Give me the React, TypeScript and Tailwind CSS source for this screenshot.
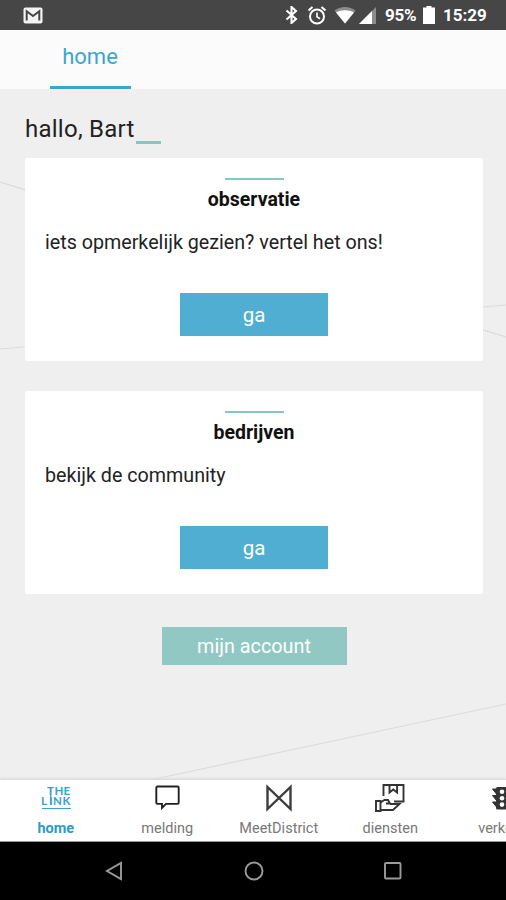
import React from 'react';

interface TopicCardProps {
  title: string;
  text: string;
}

function TopicCard({ title, text }: TopicCardProps) {
  return (
    <section className="flex h-[203px] flex-col items-center rounded-[2px] bg-white px-5 pt-5">
      <span className="h-[2px] w-[59px] shrink-0 bg-[#87c7c2]" />
      <h2 className="mt-2 text-[19.5px] leading-6 font-bold text-[#111]">{title}</h2>
      <p className="mt-[17px] w-full text-[19.7px] leading-7 text-[#222]">{text}</p>
      <button className="mt-9 h-[43px] w-[148px] shrink-0 bg-[#4faed1] pt-0.5 text-[20.5px] text-white">
        ga
      </button>
    </section>
  );
}

function StatusBar() {
  return (
    <header className="flex h-[30px] shrink-0 items-center bg-[#464646] pr-[18px] pl-[23px] text-white">
      {/* Mail notification */}
      <svg width="20" height="17" viewBox="0 0 20 17">
        <rect x="0.5" y="0.5" width="19" height="16" rx="2" fill="#f4f4f4" />
        <path d="M3.7 13.5V4.2L10 9l6.3-4.8v9.3" fill="none" stroke="#464646" strokeWidth="2" />
      </svg>
      {/* Bluetooth */}
      <svg className="ml-auto" width="14" height="18" viewBox="0 0 14 18">
        <path d="M1.5 4.5 11 13l-4.5 4V1L11 5 1.5 13.5" fill="none" stroke="#fff" strokeWidth="2.1" />
      </svg>
      {/* Alarm */}
      <svg className="ml-2" width="20" height="19" viewBox="0 0 20 19">
        <g fill="none" stroke="#fff" strokeWidth="2">
          <circle cx="10" cy="10.5" r="7" />
          <path d="M1.5 4.5 5.5 1M18.5 4.5 14.5 1" />
          <path d="M10 6.5v4.3l3 1.9" strokeWidth="1.6" />
        </g>
      </svg>
      {/* Wifi */}
      <svg className="ml-[7px]" width="22" height="18" viewBox="0 0 22 18">
        <path d="M0.5 4.5C6.5 -0.2 15.5 -0.2 21.5 4.5L11 17.5Z" fill="#8c8c8c" />
        <path d="M2 6.5C7 3.5 15 3.5 20 6.5L11 17.5Z" fill="#fff" />
      </svg>
      {/* Signal */}
      <svg className="ml-[3px]" width="17" height="17" viewBox="0 0 17 17">
        <path d="M0 17 17 0v17Z" fill="#8c8c8c" />
        <path d="M0 17 13 4v13Z" fill="#fff" />
      </svg>
      <span className="ml-[9px] w-[33px] text-[17px] leading-none font-bold tracking-[-0.3px] whitespace-nowrap">
        95%
      </span>
      <svg className="ml-[5px]" width="12" height="18" viewBox="0 0 12 18">
        <path d="M3.5 0h5v1.5H12V18H0V1.5h3.5Z" fill="#fff" />
      </svg>
      <span className="ml-2 w-[45px] text-[17px] leading-none font-bold whitespace-nowrap">15:29</span>
    </header>
  );
}

function LinkLogo() {
  return (
    <svg className="overflow-visible" width="32" height="28" viewBox="0 0 32 28">
      <g fill="#3aa3cb" fontSize="11.5" fontFamily="Lato, sans-serif">
        <text x="7 14.5 23.5" y="11">THE</text>
        <text x="1 9.2 13 22.5" y="21">LINK</text>
      </g>
      {/* Shared stem of the T and the I */}
      <path d="M10.7 3.5V21M2 24.5h29" stroke="#3aa3cb" strokeWidth="1.2" />
    </svg>
  );
}

function BubbleIcon() {
  return (
    <svg width="26" height="26" viewBox="0 0 26 26">
      <path
        d="M3.5 1.5h20a1.2 1.2 0 0 1 1.2 1.2v15a1.2 1.2 0 0 1-1.2 1.2H12l-4 4v-4H3.5a1.2 1.2 0 0 1-1.2-1.2v-15A1.2 1.2 0 0 1 3.5 1.5Z"
        fill="none"
        stroke="#222"
        strokeWidth="1.9"
      />
    </svg>
  );
}

function DistrictIcon() {
  return (
    <svg width="28" height="28" viewBox="0 0 28 28">
      <path d="M2.5 3v22L25.5 3v22Z" fill="none" stroke="#3c3c3c" strokeWidth="2.4" />
    </svg>
  );
}

function ServiceIcon() {
  return (
    <svg width="32" height="28" viewBox="0 0 32 28">
      <g fill="none" stroke="#333" strokeWidth="1.9">
        <path d="M9.5 12V1H29.5v16.5H20" />
        <path d="M15.5 1v7.5l3.8-3 3.8 3V1" />
        <path d="M2 17h4.5v10H2Z" />
        <path d="M6.5 18.5l4-2.500h3.500l2 3.500h-4M16 20h9.500l-6.500 6H6.500" />
      </g>
    </svg>
  );
}

function TrafficIcon() {
  return (
    <svg width="20" height="26" viewBox="0 0 20 26">
      <path
        d="M0.5 4h4v5zM0.5 10.5h4v5zM0.5 17h4v5zM19.5 4h-4v5zM19.5 10.5h-4v5zM19.5 17h-4v5z"
        fill="#333"
        stroke="#333"
      />
      <rect x="4" y="2" width="12" height="22.5" rx="1.5" fill="#333" />
      <g fill="#fff">
        <circle cx="10" cy="6.8" r="2.3" />
        <circle cx="10" cy="13.2" r="2.3" />
        <circle cx="10" cy="19.6" r="2.3" />
      </g>
    </svg>
  );
}

const tabs = [
  { label: 'home', icon: <LinkLogo /> },
  { label: 'melding', icon: <BubbleIcon /> },
  { label: 'MeetDistrict', icon: <DistrictIcon /> },
  { label: 'diensten', icon: <ServiceIcon /> },
  { label: 'verkeer', icon: <TrafficIcon /> },
];

export default function App() {
  return (
    <div className="flex h-[900px] w-[506px] flex-col overflow-hidden bg-[#efefef] font-['Roboto',sans-serif]">
      <StatusBar />

      <nav className="flex h-[59px] shrink-0 bg-[#fbfbfb] pl-[50px]">
        <a className="flex w-[81px] justify-center border-b-[3px] border-[#3ba6cd] pt-[11px] pr-px text-[22px] leading-8 text-[#3ba6cd]">
          home
        </a>
      </nav>

      <main className="relative isolate flex min-h-0 flex-1 flex-col pr-[23px] pl-[25px]">
        {/* Backdrop lines */}
        <svg className="absolute inset-0 -z-10" width="506" height="691" viewBox="0 89 506 691">
          <path d="M0 182 506 337M0 349 506 305M150 780 506 704" fill="none" stroke="#dcdcdc" strokeWidth="1.2" />
        </svg>

        <h1 className="mt-6 flex h-[45px] items-start text-[24px] leading-8 tracking-[0.25px] text-[#222]">
          hallo, Bart
          <span className="mt-7 ml-px h-[3px] w-[25px] bg-[#87c7c2]" />
        </h1>

        <div className="flex flex-col gap-[30px]">
          <TopicCard title="observatie" text="iets opmerkelijk gezien? vertel het ons!" />
          <TopicCard title="bedrijven" text="bekijk de community" />
        </div>

        <button className="mt-[33px] h-[38px] w-[185px] self-center bg-[#92c8c4] pt-0.5 text-[19.8px] text-white">
          mijn account
        </button>
      </main>

      <nav className="flex h-[62px] shrink-0 border-b border-[#999] bg-white shadow-[0_-1px_3px_rgba(0,0,0,0.12)]">
        {tabs.map((tab, i) => (
          <a
            key={tab.label}
            className={`flex w-[111.5px] shrink-0 flex-col items-center ${
              i === 0 ? 'font-bold text-[#2b9cc7]' : 'text-[#777]'
            }`}
          >
            <span className="flex h-9 items-center justify-center">{tab.icon}</span>
            <span className="mt-[3px] text-[14.5px] leading-5">{tab.label}</span>
          </a>
        ))}
      </nav>

      {/* Android system buttons */}
      <footer className="flex h-[58px] shrink-0 items-center justify-center gap-[119.5px] bg-black pl-px">
        <svg width="20" height="20" viewBox="0 0 20 20">
          <path d="M17 2v16L3 10Z" fill="none" stroke="#9a9a9a" strokeWidth="1.9" />
        </svg>
        <svg width="20" height="20" viewBox="0 0 20 20">
          <circle cx="10" cy="10" r="8.5" fill="none" stroke="#9a9a9a" strokeWidth="1.9" />
        </svg>
        <svg width="20" height="20" viewBox="0 0 20 20">
          <rect x="2" y="2" width="15.5" height="15.5" rx="1" fill="none" stroke="#9a9a9a" strokeWidth="1.9" />
        </svg>
      </footer>
    </div>
  );
}
